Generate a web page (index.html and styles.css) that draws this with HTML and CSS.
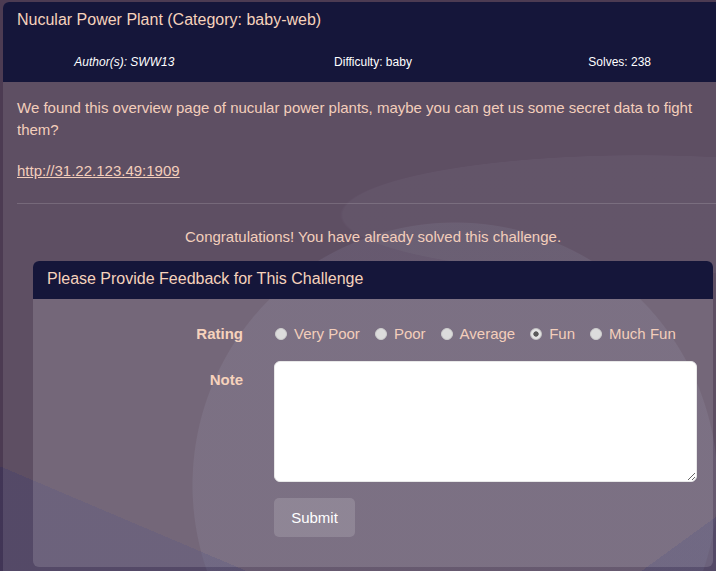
FILE: index.html
```html
<!DOCTYPE html>
<html lang="en">
<head>
<meta charset="utf-8">
<title>Nucular Power Plant</title>
<link rel="stylesheet" href="styles.css">
</head>
<body>
<div class="card">
  <div class="card-head">
    <h1 class="title">Nucular Power Plant (Category: baby-web)</h1>
    <div class="meta">
      <span class="meta-item author">Author(s): SWW13</span>
      <span class="meta-item">Difficulty: baby</span>
      <span class="meta-item">Solves: 238</span>
    </div>
  </div>
  <div class="card-body">
    <p class="desc">We found this overview page of nucular power plants, maybe you can get us some secret data to fight them?</p>
    <p class="desc"><a class="link" href="#">http://31.22.123.49:1909</a></p>
    <hr class="sep">
    <p class="congrats">Congratulations! You have already solved this challenge.</p>
    <div class="feedback">
      <div class="fb-head">Please Provide Feedback for This Challenge</div>
      <form class="fb-body">
        <div class="label">Rating</div>
        <div class="ratings">
          <label class="opt"><input type="radio" name="r" class="radio"><span>Very Poor</span></label>
          <label class="opt"><input type="radio" name="r" class="radio"><span>Poor</span></label>
          <label class="opt"><input type="radio" name="r" class="radio"><span>Average</span></label>
          <label class="opt"><input type="radio" name="r" class="radio" checked><span>Fun</span></label>
          <label class="opt"><input type="radio" name="r" class="radio"><span>Much Fun</span></label>
        </div>
        <div class="label note-label">Note</div>
        <textarea class="note"></textarea>
        <div></div>
        <div><button type="button" class="submit">Submit</button></div>
      </form>
    </div>
  </div>
</div>
</body>
</html>
```
FILE: styles.css
```css
html, body {
  margin: 0;
  padding: 0;
  overflow: hidden;
  height: 100%;
}
body {
  font-family: "Liberation Sans", Arial, sans-serif;
  background-color: #4c3b52;
  background-image:
    linear-gradient(203deg, transparent 0, transparent 709px, rgba(40, 40, 95, 0.3) 709px),
    linear-gradient(144deg, transparent 0, transparent 839px, rgba(40, 40, 95, 0.3) 839px),
    radial-gradient(circle at 455px 485px, rgba(150, 155, 185, 0.13) 0, rgba(150, 155, 185, 0.13) 262px, transparent 263px),
    radial-gradient(ellipse 300px 60px at 640px 215px, rgba(255, 255, 255, 0.035) 0, rgba(255, 255, 255, 0.035) 99%, transparent 100%);
  background-repeat: no-repeat;
}
.card {
  width: 740px;
  margin: 2px 0 0 3px;
  border-radius: 6px 6px 0 0;
  overflow: hidden;
  background: rgba(255, 255, 255, 0.1);
  min-height: 600px;
}
.card-head {
  background: #15163a;
  height: 80px;
  display: flex;
  flex-direction: column;
}
.title {
  margin: 0;
  padding: 8px 14px 0;
  font-size: 16px;
  font-weight: normal;
  line-height: 20px;
  color: #f6d2bc;
}
.meta {
  display: grid;
  grid-template-columns: 1fr 1fr 1fr;
  margin-top: 24px;
  font-size: 12px;
  line-height: 16px;
  color: #ffffff;
}
.meta-item {
  text-align: center;
  font-weight: 500;
}
.author {
  font-style: italic;
  margin-left: -4px;
}
.card-body {
  padding: 15px 14px 0;
}
.desc {
  margin: 0 0 19px;
  font-size: 15px;
  line-height: 22px;
  color: #f3cebb;
}
.link {
  color: #f3cebb;
  text-decoration: underline;
}
.sep {
  border: 0;
  border-top: 1px solid rgba(255, 255, 255, 0.15);
  margin: 21px 0 0;
}
.congrats {
  margin: 22px 0 13px;
  text-align: center;
  font-size: 15px;
  line-height: 22px;
  color: #f3cebb;
}
.feedback {
  margin: 0 16px;
  border-radius: 6px;
  overflow: hidden;
  background: rgba(255, 255, 255, 0.14);
}
.fb-head {
  background: #15163a;
  height: 38px;
  box-sizing: border-box;
  padding: 8px 14px;
  font-size: 16px;
  line-height: 20px;
  color: #f6d2bc;
}
.fb-body {
  display: grid;
  grid-template-columns: 210px 1fr;
  column-gap: 31px;
  row-gap: 16px;
  padding: 24px 16px 30px 0;
  margin: 0;
}
.label {
  text-align: right;
  font-size: 15px;
  font-weight: bold;
  line-height: 22px;
  color: #f6d2bc;
}
.note-label {
  padding-top: 8px;
}
.ratings {
  display: flex;
  align-items: center;
  gap: 14px;
  font-size: 15px;
  line-height: 22px;
  color: #f3cebb;
}
.opt {
  display: flex;
  align-items: center;
  gap: 7px;
}
.radio {
  appearance: none;
  -webkit-appearance: none;
  width: 12px;
  height: 12px;
  margin: 0 0 0 1px;
  border-radius: 50%;
  background: #dcdcdc;
  border: 1px solid #cdcdcd;
  box-sizing: border-box;
}
.radio:checked {
  background: radial-gradient(circle, #5a5a5a 0, #5a5a5a 2.3px, #e4e4e4 3px);
  border-color: #c4c4c4;
}
.note {
  display: block;
  width: 100%;
  height: 121px;
  box-sizing: border-box;
  border: 1px solid #e8e8e8;
  border-radius: 6px;
  background: #ffffff;
  margin: 0;
  padding: 6px 10px;
  font-family: "Liberation Sans", Arial, sans-serif;
  font-size: 15px;
}
.submit {
  width: 81px;
  height: 39px;
  border: 0;
  border-radius: 5px;
  background: rgba(255, 255, 255, 0.15);
  color: #ffffff;
  font-family: "Liberation Sans", Arial, sans-serif;
  font-size: 15px;
  padding: 0;
}
```
